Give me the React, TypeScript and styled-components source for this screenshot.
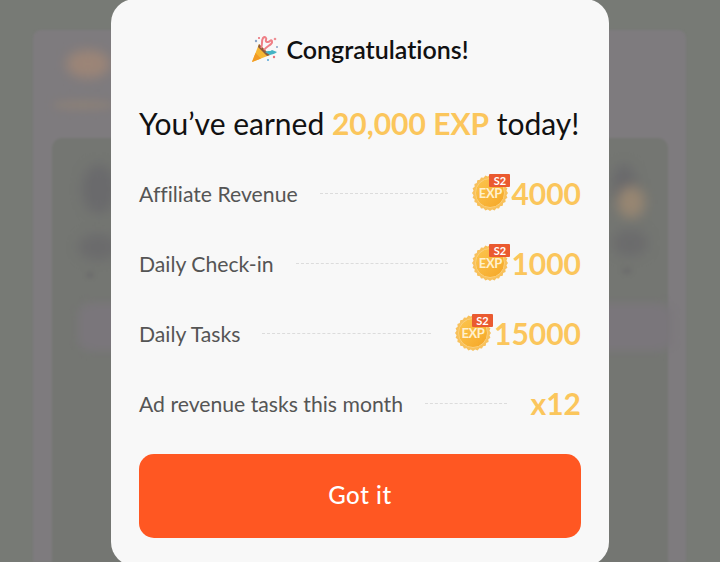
import React from 'react'
import styled, { createGlobalStyle } from 'styled-components'

const GlobalStyle = createGlobalStyle`
  html, body {
    margin: 0;
    padding: 0;
    height: 100%;
    overflow: hidden;
    background: #777a75;
    font-family: Lato, "Open Sans", sans-serif;
    font-variant-ligatures: none;
  }
`

const Screen = styled.div`
  position: relative;
  width: 720px;
  height: 562px;
  overflow: hidden;
  background: #777a75;
`

const BackPage = styled.div`
  width: 653px;
  height: 532px;
  margin-left: 33px;
  padding: 20px 18px 0 19px;
  box-sizing: border-box;
  position: relative;
  top: 30px;
  background: #7e7b7e;
  border-radius: 8px 8px 0 0;
  filter: blur(1px);
`

const Smudge = styled.div<{ $w: number; $h: number; $color: string; $ml?: number; $mt?: number; $blur?: number }>`
  width: ${p => p.$w}px;
  height: ${p => p.$h}px;
  margin-left: ${p => p.$ml ?? 0}px;
  margin-top: ${p => p.$mt ?? 0}px;
  background: ${p => p.$color};
  border-radius: 50%;
  filter: blur(${p => p.$blur ?? 5}px);
  flex: none;
`

const BackCard = styled.div`
  margin-top: 28px;
  height: 420px;
  background: #747672;
  border-radius: 10px 10px 0 0;
  padding-top: 26px;
`

const BackColumns = styled.div`
  display: flex;
  justify-content: space-between;
  padding: 0 20px 0 26px;
`

const BackColumn = styled.div`
  display: flex;
  flex-direction: column;
`

const BackBand = styled.div`
  margin: 25px -4px 0 26px;
  height: 48px;
  background: #7a767b;
  border-radius: 12px;
  filter: blur(4px);
`

const Dialog = styled.div`
  position: absolute;
  top: -1px;
  left: 111px;
  width: 498px;
  height: 567px;
  box-sizing: border-box;
  padding: 30px 28px 0;
  background: #f8f8f8;
  border-radius: 24px;
  display: flex;
  flex-direction: column;
`

const Title = styled.div`
  display: flex;
  align-items: center;
  justify-content: center;
  gap: 7px;
  height: 40px;
  font-size: 25px;
  font-weight: 600;
  color: #111;
`

const Headline = styled.div`
  margin-top: 34px;
  font-size: 30px;
  line-height: 40px;
  font-weight: 400;
  color: #111;
  white-space: nowrap;
`

const Highlight = styled.span`
  color: #fbc65c;
  font-weight: 700;
`

const Rows = styled.div`
  margin-top: 15px;
`

const Row = styled.div`
  display: flex;
  align-items: center;
  height: 70px;
`

const Label = styled.span`
  padding-top: 2px;
  font-size: 21.2px;
  color: #555;
  white-space: nowrap;
`

const Leader = styled.span`
  flex: 1;
  margin: 0 24px 0 22px;
  border-top: 1px dashed #dcdcdc;
`

const Amount = styled.span`
  font-size: 30px;
  font-weight: 700;
  color: #fbc65c;
  line-height: 36px;
`

const CoinWrap = styled.span`
  position: relative;
  width: 36px;
  height: 36px;
  margin-right: 3px;
  flex: none;
`

const CoinLabel = styled.span`
  position: absolute;
  top: 12px;
  left: 0;
  right: 0;
  text-align: center;
  font-size: 13px;
  line-height: 12px;
  font-weight: 700;
  letter-spacing: -0.4px;
  color: #fff0cc;
`

const SeasonBadge = styled.span`
  position: absolute;
  top: -1px;
  right: -2px;
  width: 21px;
  height: 13px;
  display: flex;
  align-items: center;
  justify-content: center;
  background: #ea5a30;
  border-radius: 1px;
  font-size: 11px;
  line-height: 12px;
  font-weight: 700;
  color: #fff;
`

const ConfirmButton = styled.button`
  margin-top: 16px;
  height: 84px;
  padding: 0 0 3px;
  border: 0;
  border-radius: 15px;
  background: #ff5722;
  color: #fff;
  font-family: inherit;
  font-size: 24px;
  font-weight: 500;
  letter-spacing: 0.6px;
`

// scalloped edge for the coin
const scallopPoints = () => {
  const pts: string[] = []
  const n = 48
  for (let i = 0; i < n; i++) {
    const r = i % 2 === 0 ? 18 : 16.6
    const a = (i / n) * Math.PI * 2
    pts.push(`${(18 + r * Math.cos(a)).toFixed(2)},${(18 + r * Math.sin(a)).toFixed(2)}`)
  }
  return pts.join(' ')
}

const Coin: React.FC<{ id: string }> = ({ id }) => (
  <CoinWrap>
    <svg width="36" height="36" viewBox="0 0 36 36">
      <defs>
        <linearGradient id={id} x1="0" y1="0" x2="1" y2="1">
          <stop offset="0" stopColor="#fcc64f" />
          <stop offset="1" stopColor="#f5a626" />
        </linearGradient>
      </defs>
      <polygon points={scallopPoints()} fill="#f8c15c" />
      <circle cx="18" cy="18" r="14.5" fill={`url(#${id})`} stroke="#fbd07c" strokeWidth="1" />
    </svg>
    <CoinLabel>EXP</CoinLabel>
    <SeasonBadge>S2</SeasonBadge>
  </CoinWrap>
)

const PartyPopper = () => (
  <svg width="28" height="28" viewBox="0 0 28 28">
    <path d="M1 27 L8 9 L19 20 Z" fill="#f7b733" />
    <path d="M1 27 L4.5 18 L10 23.6 Z" fill="#f29b25" />
    <path d="M8 9 L19 20 L16 21 L7 12 Z" fill="#8c5a3c" />
    <path d="M10 13 C12 9 10 6 12 3 C14 1 16 3 15 5 C14 7 17 8 19 6 C21 4 22 7 20 9 C18 11 15 12 13 15" fill="none" stroke="#ef7f86" strokeWidth="2" />
    <path d="M14 17 C17 15 19 17 21 15 L26 17 C24 19 21 19 19 20 Z" fill="#45b3c4" />
    <circle cx="5" cy="6" r="1.2" fill="#8aa5c9" />
    <circle cx="8" cy="3" r="1" fill="#e96a73" />
    <circle cx="24" cy="4" r="1.3" fill="#ef8f95" />
    <circle cx="23" cy="22" r="1.2" fill="#e9717a" />
    <circle cx="17" cy="25" r="1" fill="#5aa7d8" />
    <circle cx="26" cy="12" r="1" fill="#8aa5c9" />
  </svg>
)

const App: React.FC = () => (
  <Screen>
    <GlobalStyle />
    <BackPage>
      <Smudge $w={44} $h={28} $color="#9c8577" $ml={14} $blur={6} />
      <Smudge $w={62} $h={10} $color="#8b8078" $mt={22} $blur={4} />
      <BackCard>
        <BackColumns>
          <BackColumn>
            <Smudge $w={34} $h={50} $color="#6a6a6c" $ml={4} $blur={6} />
            <Smudge $w={40} $h={26} $color="#6b6b6c" $mt={20} $blur={6} />
            <Smudge $w={8} $h={6} $color="#6c6c6c" $ml={8} $mt={12} $blur={2} />
          </BackColumn>
          <BackColumn>
            <Smudge $w={24} $h={40} $color="#6a6a6c" $blur={6} />
            <Smudge $w={28} $h={32} $color="#978672" $ml={5} $mt={-18} $blur={6} />
            <Smudge $w={36} $h={26} $color="#6b6b6c" $mt={12} $blur={6} />
            <Smudge $w={10} $h={6} $color="#6c6c6c" $ml={10} $mt={12} $blur={2} />
          </BackColumn>
        </BackColumns>
        <BackBand />
      </BackCard>
    </BackPage>
    <Dialog>
      <Title>
        <PartyPopper />
        Congratulations!
      </Title>
      <Headline>
        You’ve earned <Highlight>20,000 EXP</Highlight> today!
      </Headline>
      <Rows>
        <Row>
          <Label>Affiliate Revenue</Label>
          <Leader />
          <Coin id="coin-a" />
          <Amount>4000</Amount>
        </Row>
        <Row>
          <Label>Daily Check-in</Label>
          <Leader />
          <Coin id="coin-b" />
          <Amount>1000</Amount>
        </Row>
        <Row>
          <Label>Daily Tasks</Label>
          <Leader />
          <Coin id="coin-c" />
          <Amount>15000</Amount>
        </Row>
        <Row>
          <Label>Ad revenue tasks this month</Label>
          <Leader />
          <Amount>x12</Amount>
        </Row>
      </Rows>
      <ConfirmButton>Got it</ConfirmButton>
    </Dialog>
  </Screen>
)

export default App
